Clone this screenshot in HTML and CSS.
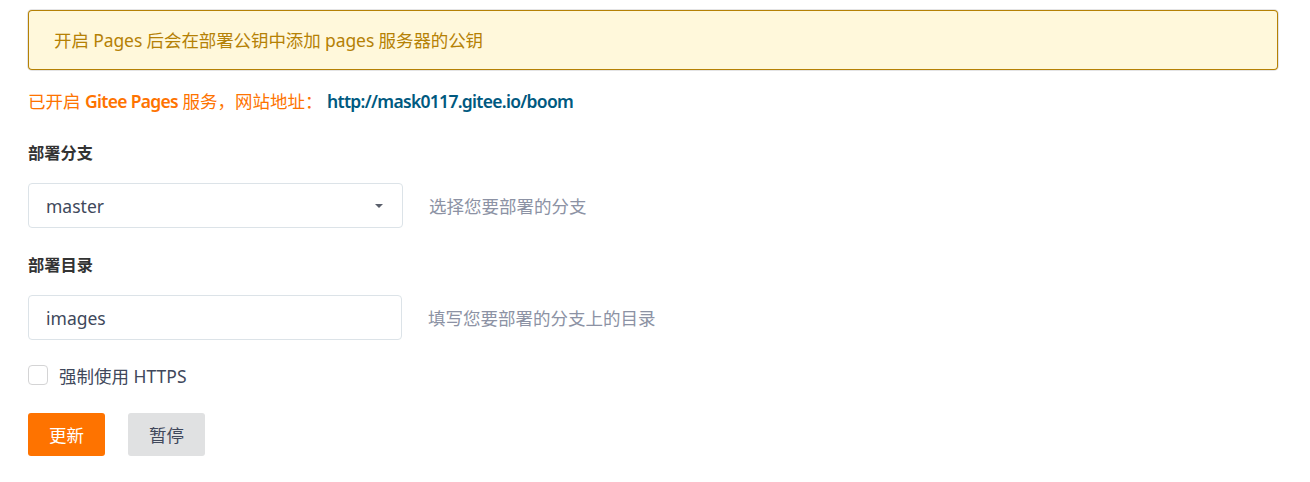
FILE: index.html
```html
<!DOCTYPE html>
<html lang="zh-CN">
<head>
<meta charset="utf-8">
<title>Gitee Pages</title>
<link rel="stylesheet" href="styles.css">
</head>
<body>
<div class="page">
  <div class="message">开启 Pages 后会在部署公钥中添加 pages 服务器的公钥</div>
  <div class="status">已开启 <b>Gitee Pages</b> 服务，网站地址： <a class="site-link" href="#">http://mask0117.gitee.io/boom</a></div>

  <div class="field-label label-first">部署分支</div>
  <div class="row">
    <div class="select">
      <span class="select-text">master</span>
      <span class="caret"></span>
    </div>
    <span class="hint">选择您要部署的分支</span>
  </div>

  <div class="field-label">部署目录</div>
  <div class="row">
    <div class="input">images</div>
    <span class="hint">填写您要部署的分支上的目录</span>
  </div>

  <label class="checkbox">
    <span class="box"></span>
    <span class="check-text">强制使用 HTTPS</span>
  </label>

  <div class="actions">
    <button class="btn btn-primary">更新</button>
    <button class="btn btn-default">暂停</button>
  </div>
</div>
</body>
</html>
```
FILE: styles.css
```css
html, body {
  margin: 0;
  padding: 0;
  background: #ffffff;
}
body {
  font-family: "Noto Sans", "Noto Sans CJK SC", sans-serif;
  font-size: 17.5px;
  color: #40485b;
}
.page {
  padding: 10px 32px 0 28px;
}
.message {
  height: 60px;
  box-sizing: border-box;
  padding: 0 26px;
  display: flex;
  align-items: center;
  background: #fff8db;
  color: #b58105;
  border-radius: 4px;
  box-shadow: inset 0 0 0 1px #b58105, 0 0 0 1px rgba(34, 36, 38, 0.12);
  line-height: 24px;
  letter-spacing: -0.1px;
}
.status {
  margin-top: 19px;
  height: 24px;
  line-height: 24px;
  color: #fe7300;
}
.status b {
  font-weight: 600;
  letter-spacing: -0.7px;
}
.site-link {
  color: #005980;
  font-weight: 600;
  letter-spacing: -0.7px;
  text-decoration: none;
}
.field-label {
  margin-top: 28px;
  font-size: 16.25px;
  font-weight: 700;
  line-height: 24px;
  color: #333333;
}
.field-label + .row {
  margin-top: 18px;
}
.row + .field-label {
  margin-top: 25px;
}
.row {
  display: flex;
  align-items: center;
}
.select, .input {
  width: 375px;
  height: 45px;
  box-sizing: border-box;
  border: 1px solid #dce3e8;
  border-radius: 4px;
  padding: 0 17px;
  display: flex;
  align-items: center;
  color: #40485b;
  background: #fff;
}
.input {
  width: 374px;
}
.select-text {
  flex: 1;
}
.caret {
  width: 0;
  height: 0;
  border-left: 4px solid transparent;
  border-right: 4px solid transparent;
  border-top: 4px solid #5a5f6b;
  margin-right: 2px;
}
.hint {
  margin-left: 26px;
  color: #8c92a4;
}
.checkbox {
  margin-top: 25px;
  display: flex;
  align-items: center;
  height: 20px;
}
.box {
  width: 20px;
  height: 20px;
  box-sizing: border-box;
  border: 1px solid #d4d4d5;
  border-radius: 4px;
  background: #fff;
}
.check-text {
  margin-left: 11px;
  color: #40485b;
}
.actions {
  margin-top: 28px;
  display: flex;
  gap: 23px;
}
.btn {
  width: 77px;
  height: 43px;
  border: none;
  border-radius: 3px;
  font-family: inherit;
  font-size: 17.5px;
  padding: 0;
  cursor: pointer;
}
.btn-primary {
  background: #fe7300;
  color: #ffffff;
}
.btn-default {
  background: #e0e1e2;
  color: #40485b;
}
```
